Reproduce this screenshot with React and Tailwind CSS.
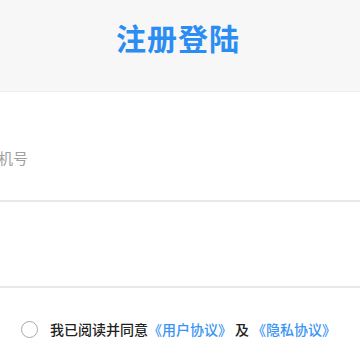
import React, { useState } from 'react';

const App = () => {
  const [agreed, setAgreed] = useState(false);

  return (
    <div className="w-[360px] h-[360px] overflow-hidden bg-white font-['Noto_Sans_CJK_SC','Noto_Sans',sans-serif]">
      {/* header */}
      <div className="h-[92px] bg-[#f7f7f7] border-b border-[#f0f0f0] flex items-center justify-center">
        <h1 className="text-[30px] font-bold text-[#2b8df2] tracking-[1px] -mt-[16px] ml-[-4px]">注册登陆</h1>
      </div>

      {/* phone input */}
      <div className="h-[110px] flex items-end border-b-2 border-[#e8e8e8]">
        <input
          className="w-full ml-[-62px] mb-[31px] text-[15px] text-[#333] placeholder:text-[#a0a0a0] outline-none bg-transparent"
          placeholder="请输入手机号"
        />
      </div>

      {/* code input */}
      <div className="h-[86px] border-b-2 border-[#e8e8e8]" />

      {/* agreement */}
      <div className="flex items-center pl-[21px] pt-[31px] text-[14px] font-medium">
        <button
          onClick={() => setAgreed(!agreed)}
          className="w-[17px] h-[17px] rounded-full border-[1.5px] border-[#a8a8a8] mr-[12px] flex items-center justify-center"
        >
          {agreed && <span className="w-[8px] h-[8px] rounded-full bg-[#2b8df2]" />}
        </button>
        <span className="text-[#222]">我已阅读并同意</span>
        <span className="text-[#3a94f4]">《用户协议》</span>
        <span className="text-[#222] mx-[3px]">及</span>
        <span className="text-[#3a94f4]">《隐私协议》</span>
      </div>
    </div>
  );
};

export default App;
